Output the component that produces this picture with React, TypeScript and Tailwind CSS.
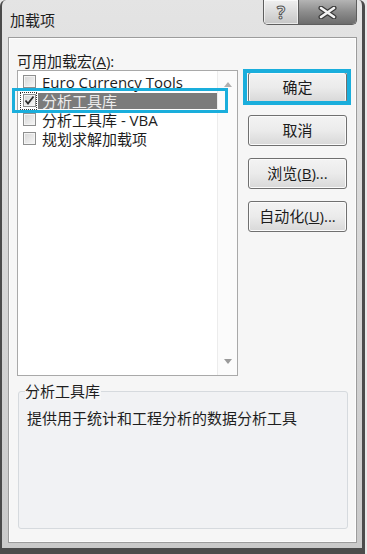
function CheckBox({ checked }: { checked?: boolean }) {
  return (
    <span className="flex h-[13px] w-[13px] shrink-0 items-center justify-center border border-[#8e8f8f] bg-gradient-to-br from-[#d6d6d6] to-[#f7f7f7] shadow-[inset_0_0_0_1px_#f4f4f4]">
      {checked && (
        <svg width="11" height="11" viewBox="0 0 11 11">
          <path d="M1.5 5.5 L4 8.5 L9.5 1.5" fill="none" stroke="#2a2a2a" strokeWidth="1.8" />
        </svg>
      )}
    </span>
  );
}

function Button({ children, focused }: { children: React.ReactNode; focused?: boolean }) {
  return (
    <div className="relative">
      <div className="flex h-[31px] w-[99px] items-center justify-center rounded-[3px] border border-[#707070] bg-gradient-to-b from-[#f3f3f3] via-[#ebebeb] to-[#d8d8d8] text-[15px] leading-none text-[#1c1c1c] shadow-[inset_0_0_0_1px_#fbfbfb]">
        {children}
      </div>
      {focused && (
        <div className="absolute -left-[5px] -right-[4px] -top-[3px] -bottom-[2px] border-[4px] border-[#1aaedc]" />
      )}
    </div>
  );
}

export default function App() {
  const items = ["Euro Currency Tools", "分析工具库", "分析工具库 - VBA", "规划求解加载项"];

  return (
    <div className="h-[554px] w-[367px] bg-[#e8e8e8] font-['Open_Sans','Noto_Sans_CJK_SC',sans-serif]">
      <div className="flex h-[554px] w-[365px] flex-col rounded-t-[6px] border-b-[6px] border-l-2 border-r-[3px] border-[#4b4b4b] bg-gradient-to-b from-[#e4e4e4] via-[#d6d6d6] to-[#cacaca] pb-[5px] pl-[6px] pr-[5px]">
        {/* title bar */}
        <div className="flex h-[37px] shrink-0 items-start">
          <span className="ml-[2px] mt-[11px] text-[15px] leading-[18px] text-[#1e1e1e]">加载项</span>
          <div className="ml-auto flex h-[25px] overflow-hidden rounded-b-[5px] border border-t-0 border-[#5e5e5e]">
            <div className="flex w-[35px] items-center justify-center border-r border-[#5e5e5e] bg-gradient-to-b from-[#f0f0f0] to-[#c6c6c6] shadow-[inset_0_0_0_1px_rgba(255,255,255,0.6)]">
              <span className="text-[17px] font-bold leading-none text-[#e8e8e8] [-webkit-text-stroke:1px_#555]">?</span>
            </div>
            <div className="flex w-[57px] items-center justify-center bg-gradient-to-b from-[#b4b4b4] via-[#8c8c8c] to-[#6c6c6c]">
              <svg width="21" height="13" viewBox="0 0 21 13">
                <path d="M4 2 L17 11 M17 2 L4 11" stroke="#3a3a3a" strokeWidth="5" strokeLinecap="round" />
                <path d="M4 2 L17 11 M17 2 L4 11" stroke="#f4f4f4" strokeWidth="2.6" strokeLinecap="round" />
              </svg>
            </div>
          </div>
        </div>

        {/* client area */}
        <div className="flex flex-1 flex-col border border-[#9c9c9c] bg-[#f6f6f6] px-[8px] pb-[13px] pt-[14px] text-[#1e1e1e] shadow-[inset_0_0_0_1px_#fdfdfd]">
          <div className="h-[18px] text-[15px] leading-[18px]">
            可用加载宏(<span className="underline">A</span>):
          </div>

          <div className="flex h-[306px] shrink-0">
            <div className="relative flex h-[306px] w-[221px] border border-[#a9a9a9] bg-white">
              <div className="flex flex-1 flex-col pt-[1px]">
                {items.map((item, i) => (
                  <div key={item} className="relative flex h-[19px] items-center pl-[5px] text-[15px] leading-[16px]">
                    <CheckBox checked={i === 1} />
                    {i === 1 ? (
                      <span className="ml-[2px] flex h-[16px] flex-1 items-center bg-[#7b7b7b] pl-[4px] text-[#ececec]">{item}</span>
                    ) : (
                      <span className="ml-[6px] whitespace-nowrap">{item}</span>
                    )}
                    {i === 1 && (
                      <span className="absolute left-[2px] top-[1px] h-[18px] w-[17px] border border-dotted border-[#333]" />
                    )}
                  </div>
                ))}
              </div>
              <div className="flex w-[20px] flex-col items-center justify-between border-l border-[#ececec] bg-[#fbfbfb] pb-[11px] pt-[11px]">
                <svg width="8" height="5" viewBox="0 0 8 5">
                  <path d="M0 5 L4 0 L8 5 Z" fill="#b0b0b0" />
                </svg>
                <svg width="8" height="5" viewBox="0 0 8 5">
                  <path d="M0 0 L8 0 L4 5 Z" fill="#9a9a9a" />
                </svg>
              </div>
              <div className="absolute -left-[6px] top-[17px] h-[25px] w-[216px] border-[3px] border-[#1aaedc]" />
            </div>

            <div className="ml-[10px] mt-[2px] flex flex-col gap-[12px]">
              <Button focused>确定</Button>
              <Button>取消</Button>
              <Button>
                浏览(<span className="underline">B</span>)...
              </Button>
              <Button>
                自动化(<span className="underline">U</span>)...
              </Button>
            </div>
          </div>

          <div className="relative ml-[1px] mt-[15px] w-[330px] flex-1 rounded-[3px] border border-[#d6dade] bg-[#f1f2f4] pl-[8px] pt-[17px]">
            <span className="absolute -top-[10px] left-[6px] bg-[#f6f6f6] pr-[1px] text-[15px] leading-[18px]">分析工具库</span>
            <div className="text-[15px] leading-[18px]">提供用于统计和工程分析的数据分析工具</div>
          </div>
        </div>
      </div>
    </div>
  );
}
